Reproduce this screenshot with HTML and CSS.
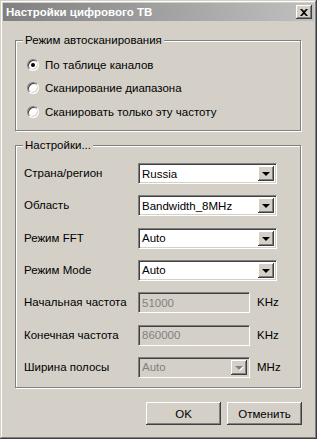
FILE: index.html
```html
<!DOCTYPE html>
<html lang="ru">
<head>
  <meta charset="UTF-8">
  <title>Настройки цифрового ТВ</title>
  <link rel="stylesheet" href="styles.css">
</head>
<body>
  <div class="window">
    <div class="titlebar">
      <span class="title">Настройки цифрового ТВ</span>
      <span class="close">
        <svg width="8" height="7" viewBox="0 0 8 7"><path d="M0 0h2l2 2 2-2h2L5 3.5 8 7H6L4 5 2 7H0l3-3.5z" fill="#000"/></svg>
      </span>
    </div>

    <div class="content">
      <div class="group group-scan">
        <span class="legend">Режим автосканирования</span>
        <div class="radio-row"><span class="radio checked"></span>По таблице каналов</div>
        <div class="radio-row"><span class="radio"></span>Сканирование диапазона</div>
        <div class="radio-row"><span class="radio"></span>Сканировать только эту частоту</div>
      </div>

      <div class="group group-settings">
        <span class="legend">Настройки...</span>
        <div class="field-row">
          <span class="label">Страна/регион</span>
          <span class="combo"><span class="value">Russia</span><span class="arrow"></span></span>
        </div>
        <div class="field-row">
          <span class="label">Область</span>
          <span class="combo"><span class="value">Bandwidth_8MHz</span><span class="arrow"></span></span>
        </div>
        <div class="field-row">
          <span class="label">Режим FFT</span>
          <span class="combo"><span class="value">Auto</span><span class="arrow"></span></span>
        </div>
        <div class="field-row">
          <span class="label">Режим Mode</span>
          <span class="combo"><span class="value">Auto</span><span class="arrow"></span></span>
        </div>
        <div class="field-row">
          <span class="label">Начальная частота</span>
          <span class="edit disabled"><span class="value">51000</span></span>
          <span class="unit">KHz</span>
        </div>
        <div class="field-row">
          <span class="label">Конечная частота</span>
          <span class="edit disabled"><span class="value">860000</span></span>
          <span class="unit">KHz</span>
        </div>
        <div class="field-row">
          <span class="label">Ширина полосы</span>
          <span class="combo short disabled"><span class="value">Auto</span><span class="arrow"></span></span>
          <span class="unit">MHz</span>
        </div>
      </div>

      <div class="buttons">
        <button class="btn">OK</button>
        <button class="btn">Отменить</button>
      </div>
    </div>
  </div>
</body>
</html>
```

FILE: styles.css
```css
body {
  margin: 0;
  padding: 0;
  background-color: #d4d0c8;
  font-family: "Liberation Sans", Arial, sans-serif;
  font-size: 11.5px;
  color: #000;
}

.window {
  width: 317px;
  height: 439px;
  box-sizing: border-box;
  padding: 3px;
  background-color: #d4d0c8;
  box-shadow: inset -1px -1px 0 #404040, inset 1px 1px 0 #d4d0c8,
              inset -2px -2px 0 #808080, inset 2px 2px 0 #fff;
}

.titlebar {
  height: 18px;
  display: flex;
  align-items: center;
  justify-content: space-between;
  padding: 0 2px 0 3px;
  background: linear-gradient(to right, #808080, #c0c0c0);
}

.title {
  color: #fff;
  font-weight: bold;
  font-size: 11.5px;
}

.close {
  width: 16px;
  height: 14px;
  box-sizing: border-box;
  display: flex;
  align-items: center;
  justify-content: center;
  background-color: #d4d0c8;
  box-shadow: inset -1px -1px 0 #404040, inset 1px 1px 0 #fff,
              inset -2px -2px 0 #808080;
}

.content {
  padding: 19px 13px 0 12px;
}

.group {
  position: relative;
  border: 1px solid #808080;
  box-shadow: inset 1px 1px 0 #fff, 1px 1px 0 #fff;
}

.legend {
  position: absolute;
  top: -7px;
  left: 7px;
  padding: 0 2px;
  background-color: #d4d0c8;
  line-height: 13px;
}

.group-scan {
  height: 91px;
  box-sizing: border-box;
  padding: 12px 0 0 11px;
}

.radio-row {
  height: 23.5px;
  display: flex;
  align-items: center;
  gap: 6px;
}

.radio {
  width: 12px;
  height: 12px;
  box-sizing: border-box;
  border-radius: 50%;
  border: 1px solid;
  border-color: #808080 #fff #fff #808080;
  background-color: #fff;
  box-shadow: inset 1px 1px 0 #404040, inset -1px -1px 0 #d4d0c8;
  display: flex;
  align-items: center;
  justify-content: center;
}

.radio.checked::after {
  content: "";
  width: 4px;
  height: 4px;
  border-radius: 50%;
  background-color: #000;
}

.group-settings {
  margin-top: 14px;
  height: 243px;
  box-sizing: border-box;
  padding: 17px 0 0 8px;
}

.field-row {
  height: 32.33px;
  display: flex;
  align-items: flex-start;
}

.label {
  width: 114px;
  line-height: 21px;
}

.combo, .edit {
  height: 21px;
  box-sizing: border-box;
  display: flex;
  align-items: center;
  justify-content: space-between;
  background-color: #fff;
  border: 1px solid;
  border-color: #808080 #fff #fff #808080;
  box-shadow: inset 1px 1px 0 #404040, inset -1px -1px 0 #d4d0c8;
  padding: 2px;
}

.combo {
  width: 139px;
}

.combo.short, .edit {
  width: 112px;
}

.value {
  padding-left: 1px;
}

.disabled {
  background-color: #d4d0c8;
  color: #808080;
}

.arrow {
  width: 16px;
  height: 15px;
  box-sizing: border-box;
  background-color: #d4d0c8;
  box-shadow: inset -1px -1px 0 #404040, inset 1px 1px 0 #fff,
              inset -2px -2px 0 #808080;
  display: flex;
  align-items: center;
  justify-content: center;
}

.arrow::after {
  content: "";
  border-left: 4px solid transparent;
  border-right: 4px solid transparent;
  border-top: 4px solid #000;
  margin-top: 1px;
  margin-left: -1px;
}

.disabled .arrow::after {
  border-top-color: #808080;
  filter: drop-shadow(1px 1px 0 #fff);
}

.unit {
  margin-left: 7px;
  line-height: 21px;
}

.buttons {
  display: flex;
  justify-content: flex-end;
  gap: 6px;
  margin-top: 14px;
  margin-right: -1px;
}

.btn {
  width: 75px;
  height: 23px;
  font-family: "Liberation Sans", Arial, sans-serif;
  font-size: 11.5px;
  color: #000;
  background-color: #d4d0c8;
  border: none;
  padding: 0;
  box-shadow: inset -1px -1px 0 #404040, inset 1px 1px 0 #fff,
              inset -2px -2px 0 #808080;
}
```
